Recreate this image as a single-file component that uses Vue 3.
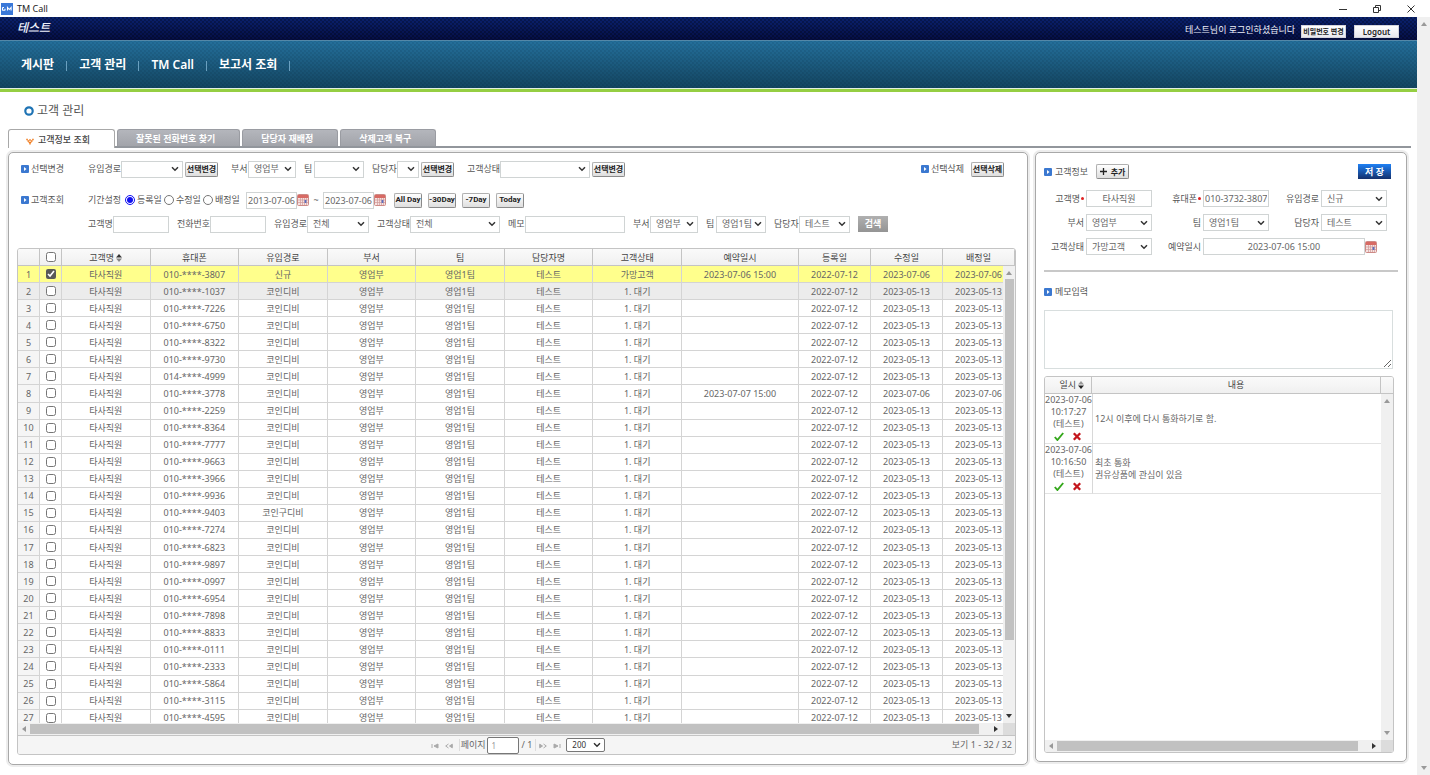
<script setup>
import { ref } from 'vue'

const nav = ['게시판', '고객 관리', 'TM Call', '보고서 조회']
const tabs = ['잘못된 전화번호 찾기', '담당자 재배정', '삭제고객 복구']
const columns = ['휴대폰', '유입경로', '부서', '팀', '담당자명', '고객상태', '예약일시', '등록일', '수정일', '배정일']
const suffixes = ['3807', '1037', '7226', '6750', '8322', '9730', '4999', '3778', '2259', '8364', '7777', '9663', '3966', '9936', '9403', '7274', '6823', '9897', '0997', '6954', '7898', '8833', '0111', '2333', '5864', '3115', '4595']

const rows = suffixes.map((s, i) => ({
  no: i + 1,
  checked: i === 0,
  cells: [
    '타사직원',
    (i === 6 ? '014' : '010') + '-****-' + s,
    i === 0 ? '신규' : i === 14 ? '코인구디비' : '코인디비',
    '영업부',
    '영업1팀',
    '테스트',
    i === 0 ? '가망고객' : '1. 대기',
    i === 0 ? '2023-07-06 15:00' : i === 7 ? '2023-07-07 15:00' : '',
    '2022-07-12',
    i === 0 || i === 7 ? '2023-07-06' : '2023-05-13',
    i === 0 || i === 7 ? '2023-07-06' : '2023-05-13',
  ],
}))

const memos = [
  { date: '2023-07-06', time: '10:17:27', who: '(테스트)', lines: ['12시 이후에 다시 통화하기로 함.'] },
  { date: '2023-07-06', time: '10:16:50', who: '(테스트)', lines: ['최초 통화', '권유상품에 관심이 있음'] },
]
const period = ref('reg')
</script>

<template>
  <div class="window">
    <header class="titlebar">
      <svg class="app-icon" viewBox="0 0 12 12"><rect width="12" height="12" fill="#3a78d8" /><path d="M1.5 4.5v3M1.5 4.5h1.5M1.5 7.3h2.5M4 5.8v1.6M6.5 7.5v-3l1.8 2 1.8-2v3" fill="none" stroke="#fff" stroke-width="1.1" /></svg>
      <span class="app-name">TM Call</span>
      <div class="win-controls">
        <button aria-label="최소화"><svg viewBox="0 0 10 10"><path d="M1 5.5h8" /></svg></button>
        <button aria-label="이전 크기로"><svg viewBox="0 0 10 10"><path d="M1.5 3.5h5v5h-5zM3.5 3.3V1.5h5v5H6.8" /></svg></button>
        <button aria-label="닫기"><svg viewBox="0 0 10 10"><path d="M1.5 1.5l7 7M8.5 1.5l-7 7" /></svg></button>
      </div>
    </header>

    <div class="viewport">
      <div class="page">
        <div class="topbar">
          <span class="brand">테스트</span>
          <span class="user">테스트님이 로그인하셨습니다</span>
          <button class="top-btn small">비밀번호 변경</button>
          <button class="top-btn">Logout</button>
        </div>
        <nav class="nav">
          <template v-for="n in nav" :key="n">
            <a href="#">{{ n }}</a><i></i>
          </template>
        </nav>

        <h1 class="heading"><svg viewBox="0 0 10 10"><circle cx="5" cy="5" r="3.7" fill="none" stroke="#1e73b4" stroke-width="2.2" /></svg>고객 관리</h1>

        <div class="tabs">
          <button class="tab active">
            <svg viewBox="0 0 8 7"><path d="M0.3 1.5h1.5M6.2 1.5h1.5M1.5 3h1.6M4.9 3h1.6M3.2 2h1.6M2.6 4.4h2.8M3.3 5.8h1.4" stroke="#f07818" stroke-width="1.4" fill="none" /></svg>고객정보 조회
          </button>
          <button v-for="t in tabs" :key="t" class="tab">{{ t }}</button>
        </div>

        <div class="panels">
          <section class="panel left">
            <div class="row">
              <h2 class="title lead"><svg class="bullet" viewBox="0 0 8 8"><rect width="8" height="8" rx="1" fill="#3b78d0" /><path d="M3 2v4l2.5-2z" fill="#fff" /></svg>선택변경</h2>
              <div class="field"><label class="l4" for="a1">유입경로</label><select id="a1" class="w62"><option></option></select><button class="btn near">선택변경</button></div>
              <div class="field wide"><label class="l2" for="a2">부서</label><select id="a2" class="w48"><option>영업부</option></select></div>
              <div class="field"><label class="l1" for="a3">팀</label><select id="a3" class="w50"><option></option></select></div>
              <div class="field"><label class="l3" for="a4">담당자</label><select id="a4" class="w22"><option></option></select><button class="btn near">선택변경</button></div>
              <div class="field wide"><label class="l4" for="a5">고객상태</label><select id="a5" class="w90"><option></option></select><button class="btn near">선택변경</button></div>
              <div class="field end">
                <h2 class="title"><svg class="bullet" viewBox="0 0 8 8"><rect width="8" height="8" rx="1" fill="#3b78d0" /><path d="M3 2v4l2.5-2z" fill="#fff" /></svg>선택삭제</h2>
                <button class="btn">선택삭제</button>
              </div>
            </div>

            <div class="row second">
              <h2 class="title lead"><svg class="bullet" viewBox="0 0 8 8"><rect width="8" height="8" rx="1" fill="#3b78d0" /><path d="M3 2v4l2.5-2z" fill="#fff" /></svg>고객조회</h2>
              <div class="radios" role="radiogroup" aria-label="기간설정">
                <span class="l4 caption">기간설정</span>
                <label><input v-model="period" type="radio" name="period" value="reg" />등록일</label>
                <label><input v-model="period" type="radio" name="period" value="mod" />수정일</label>
                <label><input v-model="period" type="radio" name="period" value="asg" />배정일</label>
              </div>
              <div class="dates">
                <input class="w51" value="2013-07-06" aria-label="시작일" />
                <svg class="cal" viewBox="0 0 12 12"><rect x=".5" y=".5" width="11" height="11" rx="1" fill="#f6e2e0" stroke="#cd8a86" /><rect x="1" y="1" width="10" height="3" fill="#d86a64" /><path d="M3.5 4v7M5.5 4v7M7.5 4v7M9.5 4v7M1 6h10M1 8.5h10" stroke="#d09a98" stroke-width=".7" /><rect x="7.6" y="6" width="1.8" height="3" fill="#5a6fc0" /></svg>
                <span class="tilde">~</span>
                <input class="w51" value="2023-07-06" aria-label="종료일" />
                <svg class="cal" viewBox="0 0 12 12"><rect x=".5" y=".5" width="11" height="11" rx="1" fill="#f6e2e0" stroke="#cd8a86" /><rect x="1" y="1" width="10" height="3" fill="#d86a64" /><path d="M3.5 4v7M5.5 4v7M7.5 4v7M9.5 4v7M1 6h10M1 8.5h10" stroke="#d09a98" stroke-width=".7" /><rect x="7.6" y="6" width="1.8" height="3" fill="#5a6fc0" /></svg>
              </div>
              <div class="quick">
                <button class="btn latin">All Day</button><button class="btn latin">-30Day</button><button class="btn latin">-7Day</button><button class="btn latin">Today</button>
              </div>
            </div>

            <div class="row third">
              <div class="field"><label class="l3" for="b1">고객명</label><input id="b1" class="w56" /></div>
              <div class="field"><label class="l4" for="b2">전화번호</label><input id="b2" class="w56" /></div>
              <div class="field"><label class="l4" for="b3">유입경로</label><select id="b3" class="w62"><option>전체</option></select></div>
              <div class="field"><label class="l4" for="b4">고객상태</label><select id="b4" class="w90"><option>전체</option></select></div>
              <div class="field"><label class="l2" for="b5">메모</label><input id="b5" class="w100" /></div>
              <div class="field"><label class="l2" for="b6">부서</label><select id="b6" class="w48"><option>영업부</option></select></div>
              <div class="field"><label class="l1" for="b7">팀</label><select id="b7" class="w50"><option>영업1팀</option></select></div>
              <div class="field"><label class="l3" for="b8">담당자</label><select id="b8" class="w51"><option>테스트</option></select></div>
              <button class="search">검색</button>
            </div>

            <div class="grid">
              <div class="clip">
                <table class="data">
                  <colgroup>
                    <col class="c-no" /><col class="c-chk" /><col v-for="i in 7" :key="i" /><col class="c-resv" /><col class="c-date" /><col class="c-date" /><col class="c-date" />
                  </colgroup>
                  <thead>
                    <tr>
                      <th></th>
                      <th><input type="checkbox" aria-label="전체 선택" /></th>
                      <th>고객명 <svg class="sort" viewBox="0 0 6 8"><path d="M0 3.5l3-3.5 3 3.5z" fill="#333" /><path d="M0 4.5h6l-3 3.5z" fill="#888" /></svg></th>
                      <th v-for="c in columns" :key="c">{{ c }}</th>
                    </tr>
                  </thead>
                  <tbody>
                    <tr v-for="r in rows" :key="r.no" :class="{ selected: r.checked, hover: r.no === 2 }">
                      <td class="num">{{ r.no }}</td>
                      <td><input type="checkbox" :checked="r.checked" :aria-label="r.no + '행 선택'" /></td>
                      <td v-for="(c, i) in r.cells" :key="i">{{ c }}</td>
                    </tr>
                  </tbody>
                </table>
                <div class="vbar over"><i class="tri up"></i><b></b><i class="tri down dark"></i></div>
              </div>
              <div class="hbar"><i class="tri lt"></i><span class="track"><b class="main-thumb"></b></span><i class="tri rt dark"></i><em></em></div>
              <footer class="pager">
                <div class="pages">
                  <button aria-label="처음"><svg viewBox="0 0 8 6"><path d="M1 1v4M7 1v4L3 3z" /></svg></button>
                  <button aria-label="이전"><svg viewBox="0 0 8 6"><path d="M3.5 1L.7 3l2.8 2" fill="none" /><path d="M7.3 1.2v3.6L4.5 3z" /></svg></button>
                  <label for="pg">페이지</label>
                  <input id="pg" value="1" />
                  <span class="total">/ 1</span>
                  <button aria-label="다음"><svg viewBox="0 0 8 6"><path d="M.7 1.2v3.6L3.5 3z" /><path d="M4.5 1l2.8 2-2.8 2" fill="none" /></svg></button>
                  <button aria-label="마지막"><svg viewBox="0 0 8 6"><path d="M1 1v4l4-2zM7 1v4" /></svg></button>
                  <select aria-label="페이지당 행 수"><option>200</option></select>
                </div>
                <span class="range">보기 1 - 32 / 32</span>
              </footer>
            </div>
          </section>

          <aside class="panel right">
            <div class="row info">
              <h2 class="title spaced"><svg class="bullet" viewBox="0 0 8 8"><rect width="8" height="8" rx="1" fill="#3b78d0" /><path d="M3 2v4l2.5-2z" fill="#fff" /></svg>고객정보</h2>
              <button class="btn add"><svg viewBox="0 0 7 7"><path d="M3.5 0v7M0 3.5h7" stroke="#222" stroke-width="1.3" /></svg>추가</button>
              <button class="save">저 장</button>
            </div>
            <div class="form">
              <label for="f1">고객명<span class="req"></span></label><input id="f1" class="mid" value="타사직원" />
              <label for="f2">휴대폰<span class="req"></span></label><input id="f2" value="010-3732-3807" />
              <label for="f3">유입경로</label><select id="f3"><option>신규</option></select>
              <label for="f4">부서</label><select id="f4"><option>영업부</option></select>
              <label for="f5">팀</label><select id="f5"><option>영업1팀</option></select>
              <label for="f6">담당자</label><select id="f6"><option>테스트</option></select>
              <label for="f7">고객상태</label><select id="f7"><option>가망고객</option></select>
              <label for="f8">예약일시</label>
              <div class="resv">
                <input id="f8" class="mid" value="2023-07-06 15:00" />
                <svg class="cal" viewBox="0 0 12 12"><rect x=".5" y=".5" width="11" height="11" rx="1" fill="#f6e2e0" stroke="#cd8a86" /><rect x="1" y="1" width="10" height="3" fill="#d86a64" /><path d="M3.5 4v7M5.5 4v7M7.5 4v7M9.5 4v7M1 6h10M1 8.5h10" stroke="#d09a98" stroke-width=".7" /><rect x="7.6" y="6" width="1.8" height="3" fill="#5a6fc0" /></svg>
              </div>
            </div>
            <hr />
            <h2 class="title spaced"><svg class="bullet" viewBox="0 0 8 8"><rect width="8" height="8" rx="1" fill="#3b78d0" /><path d="M3 2v4l2.5-2z" fill="#fff" /></svg><label for="memo">메모입력</label></h2>
            <textarea id="memo"></textarea>

            <div class="memo-grid">
              <table class="memos">
                <colgroup><col class="m-time" /><col /><col class="m-bar" /></colgroup>
                <thead>
                  <tr>
                    <th class="when">일시 <svg class="sort" viewBox="0 0 6 8"><path d="M0 3.5l3-3.5 3 3.5z" fill="#999" /><path d="M0 4.5h6l-3 3.5z" fill="#222" /></svg></th>
                    <th>내용</th>
                    <th></th>
                  </tr>
                </thead>
              </table>
              <div class="memo-body">
                <table class="memos">
                  <colgroup><col class="m-time" /><col /></colgroup>
                  <tbody>
                    <tr v-for="m in memos" :key="m.time">
                      <td class="stamp">
                        <div>{{ m.date }}</div>
                        <div>{{ m.time }}</div>
                        <div>{{ m.who }}</div>
                        <div class="acts">
                          <button aria-label="확인"><svg viewBox="0 0 10 9"><path d="M.8 5l2.6 3L9.2 1" fill="none" stroke="#35a81c" stroke-width="1.9" /></svg></button>
                          <button aria-label="삭제"><svg viewBox="0 0 10 9"><path d="M1.8 1.2l6.4 6.6M8.2 1.2L1.8 7.8" fill="none" stroke="#c4161c" stroke-width="2.3" /></svg></button>
                        </div>
                      </td>
                      <td class="text"><div v-for="l in m.lines" :key="l">{{ l }}</div></td>
                    </tr>
                  </tbody>
                </table>
                <div class="vbar"><i class="tri up"></i><i class="tri down"></i></div>
              </div>
              <div class="hbar"><i class="tri lt"></i><span class="track"><b class="memo-thumb"></b></span><i class="tri rt dark"></i><em></em></div>
            </div>
          </aside>
        </div>
      </div>
      <div class="vbar page-bar"><i class="tri up"></i><i class="tri down"></i></div>
    </div>
  </div>
</template>

<style>
body { background: #fff; }
</style>

<style scoped>
.window, .window * { box-sizing: border-box; }
.window {
  display: flex; flex-direction: column; height: 100vh; overflow: hidden;
  font-family: "Noto Sans", "Noto Sans CJK KR", sans-serif; font-size: 9px; line-height: 12px; color: #666;
}
button, input, select, textarea { font: inherit; color: inherit; margin: 0; padding: 0; }
button { cursor: pointer; white-space: nowrap; }
svg { display: block; flex: none; }
h1, h2 { margin: 0; font-weight: 400; }

.titlebar { display: flex; align-items: center; height: 17px; flex: none; padding: 0 14px 0 1px; color: #222; }
.app-icon { width: 12px; height: 12px; margin-right: 4px; }
.win-controls { display: flex; gap: 24px; margin-left: auto; }
.win-controls button { border: 0; background: none; width: 10px; height: 10px; }
.win-controls button svg { width: 10px; height: 10px; fill: none; stroke: #333; stroke-width: 1; }

.viewport { display: flex; flex: 1; min-height: 0; }
.page { flex: 1; min-width: 0; display: flex; flex-direction: column; }

.topbar {
  display: flex; align-items: center; gap: 8px; height: 23px; flex: none; padding: 3px 18px 0 17px; color: #eef0fa;
  background:
    conic-gradient(#0004 25%, #0000 0 50%, #0004 0 75%, #0000 0) 0 0 / 4px 4px,
    linear-gradient(#0a2270, #050e44);
}
.brand { font-size: 12px; line-height: 16px; font-style: italic; align-self: flex-start; font-weight: 500; }
.user { margin-left: auto; margin-right: -2px; }
.top-btn { width: 45px; height: 13px; border: 1px solid #d4d4dc; background: linear-gradient(#fff, #e8e8ee); color: #222; font-size: 8px; line-height: 10px; font-weight: 600; margin-top: 3px; }
.top-btn.small { font-size: 7px; }
.nav {
  display: flex; align-items: center; height: 52px; flex: none; padding: 0 21px; border-bottom: 3px solid #95ce42;
  background:
    conic-gradient(#00182818 25%, #0000 0 50%, #00182818 0 75%, #0000 0) 0 0 / 4px 4px,
    linear-gradient(#24709c, #13445f);
  box-shadow: inset 0 1px #5488a8, inset 0 -1px #e4f0e0;
}
.nav a { color: #fff; font-size: 12px; line-height: 16px; font-weight: 600; text-decoration: none; white-space: nowrap; }
.nav i { width: 1px; height: 10px; margin: 3px 12px 0; background: #6aa0c0; }

.heading { display: flex; align-items: flex-start; gap: 3px; padding: 9px 24px 0; height: 37px; flex: none; font-size: 12px; line-height: 20px; color: #555; }
.heading svg { width: 10px; height: 10px; margin-top: 5px; }

.tabs { display: flex; gap: 2px; height: 19px; flex: none; margin: 0 6px 0 8px; border-bottom: 2px solid #92969c; }
.tab { height: 17px; border: 1px solid #9a9ca2; border-bottom: 0; border-radius: 3px 3px 0 0; background: linear-gradient(#b4b6bc, #a2a4aa); color: #fff; font-weight: 600; padding: 2px 24px 0 18px; }
.tab.active { display: flex; align-items: center; gap: 4px; height: 19px; width: 107px; background: #fff; color: #444; font-weight: 500; padding: 2px 17px 0; border-color: #a8a8a8; }
.tab svg { width: 8px; height: 7px; margin-top: 2px; }

.panels { display: flex; flex: 1; min-height: 0; gap: 7px; padding: 4px 10px 10px 8px; }
.panel { display: flex; flex-direction: column; min-height: 0; border: 1px solid #a8a8a8; border-radius: 5px; box-shadow: 0 0 0 2px #ededed; background: #fff; }
.left { flex: 1; min-width: 0; padding: 7px 11px 9px 8px; }
.right { width: 372px; flex: none; margin-bottom: 3px; padding: 11px 8px 8px; }

.row { display: flex; align-items: center; gap: 8px; height: 18px; flex: none; padding: 0 12px 0 4px; }
.row.second { margin-top: 13px; }
.row.third { margin-top: 6px; padding-left: 71px; }
.title { display: flex; align-items: center; gap: 2px; font-size: 9px; white-space: nowrap; color: #555; }
.title.spaced { gap: 3px; }
.title.lead { width: 59px; }
.bullet { width: 8px; height: 8px; }
.field { display: flex; align-items: center; }
.field.wide { margin-left: 5px; }
.field.end { margin-left: auto; gap: 7px; }
.l1 { width: 10px; } .l2 { width: 17px; } .l3 { width: 25px; } .l4 { width: 33px; }
.field label, .caption { flex: none; white-space: nowrap; color: #555; }

input:not([type]), select { height: 17px; border: 1px solid #d0d4d4; background-color: #fff; border-radius: 0; outline: 0; }
input:not([type]) { padding: 0 1px; }
select {
  appearance: none; padding: 0 12px 0 5px;
  background-image: url("data:image/svg+xml,%3Csvg xmlns='http://www.w3.org/2000/svg' viewBox='0 0 8 6'%3E%3Cpath d='M1 1.2l3 3 3-3' fill='none' stroke='%23333' stroke-width='1.5'/%3E%3C/svg%3E");
  background-repeat: no-repeat; background-position: right 3px center; background-size: 8px 6px;
}
.w22 { width: 22px; padding: 0; } .w48 { width: 48px; } .w50 { width: 50px; } .w51 { width: 51px; } .w56 { width: 56px; }
.w62 { width: 62px; } .w90 { width: 90px; } .w100 { width: 100px; }

.btn { width: 33px; height: 15px; border: 1px solid #b0b0b0; border-right-color: #8a8a8a; border-bottom-color: #8a8a8a; border-radius: 2px; background: linear-gradient(#fff, #dedede); color: #222; font-size: 8px; line-height: 12px; font-weight: 700; }
.btn.near { margin-left: 2px; }
.btn.latin { width: 28px; font-family: Roboto, sans-serif; font-size: 8px; }
.quick { display: flex; gap: 6px; }
.radios { display: flex; align-items: center; color: #555; }
.radios label { display: flex; align-items: center; gap: 2px; width: 39px; white-space: nowrap; }
.radios .caption { margin-right: 4px; }
input[type="radio"] { width: 10px; height: 10px; accent-color: #1010f0; flex: none; }
.dates { display: flex; align-items: center; margin-left: -4px; }
.cal { width: 12px; height: 12px; }
.tilde { width: 14px; text-align: center; }
.search { width: 30px; height: 16px; border: 0; background: linear-gradient(#b0b0b0, #949494); color: #fff; font-weight: 600; }

.grid { flex: 1; min-height: 0; display: flex; flex-direction: column; margin-top: 15px; border: 1px solid #c4c4c4; border-radius: 3px; overflow: hidden; }
.clip { flex: 1; min-height: 0; overflow: hidden; position: relative; }
table { border-collapse: separate; border-spacing: 0; table-layout: fixed; width: 100%; }
.data { height: 478px; }
.data th, .data td { height: 17px; padding: 0; text-align: center; font-weight: 400; border-right: 1px solid #d4d4d4; border-bottom: 1px solid #d4d4d4; white-space: nowrap; line-height: 9px; }
.data th, .memos th { background: linear-gradient(#fafafa, #f0f0f0); color: #444; border-color: #c4c4c4; }
.data .num { background: #f5f5f5; }
.data .selected td { background: #ffff8c; }
.data .hover td { background: #ececec; }
.c-no { width: 22px; } .c-chk { width: 22px; } .c-resv { width: 117px; } .c-date { width: 72px; }
input[type="checkbox"] { display: block; width: 10px; height: 10px; margin: 0 auto; accent-color: #585858; }
.sort { display: inline-block; width: 6px; height: 8px; vertical-align: -1px; }

.vbar { display: flex; flex-direction: column; align-items: center; width: 12px; flex: none; background: #f0f0f0; padding: 5px 0; }
.vbar.page-bar { width: 13px; }
.vbar.over { position: absolute; right: 0; top: 17px; bottom: 0; }
.vbar b { width: 9px; height: 361px; margin-top: 4px; background: #c1c1c1; }
.tri { width: 0; height: 0; flex: none; border: 3px solid transparent; }
.tri.up { border-top: 0; border-bottom: 4px solid #999; }
.tri.down { border-bottom: 0; border-top: 4px solid #999; margin-top: auto; }
.tri.lt { border-left: 0; border-right: 4px solid #999; margin: 0 4px; }
.tri.rt { border-right: 0; border-left: 4px solid #999; margin: 0 5px; }
.tri.down.dark { border-top-color: #333; }
.tri.rt.dark { border-left-color: #333; }
.hbar { display: flex; align-items: center; height: 12px; flex: none; background: #f0f0f0; }
.hbar em { width: 12px; height: 12px; background: #dcdcdc; }
.track { flex: 1; display: flex; height: 10px; }
.main-thumb { width: 99%; background: #c1c1c1; }
.memo-thumb { width: 97%; background: #c1c1c1; }

.pager { display: grid; grid-template-columns: 1fr auto 1fr; align-items: center; height: 19px; flex: none; border-top: 1px solid #c4c4c4; background: #f5f5f5; padding-right: 3px; }
.pages { grid-column: 2; display: flex; align-items: center; padding-left: 3px; }
.pages button { border: 0; background: none; width: 14px; }
.pages button svg { width: 8px; height: 6px; margin: 2px auto 0; fill: #aaa; stroke: #aaa; stroke-width: 1; }
.pages label { border-left: 1px solid #ddd; margin-left: 3px; padding: 0 1px; }
.pages input:not([type]) { width: 32px; border: 1px solid #777; border-radius: 2px; padding-left: 4px; font-size: 8px; color: #999; }
.pages .total { border-right: 1px solid #ddd; padding: 0 3px; }
.pages select { width: 39px; height: 14px; border-color: #777; border-radius: 2px; font-size: 8px; color: #333; margin-left: 2px; }
.range { text-align: right; }

.row.info { height: 15px; padding: 0 7px 0 0; }
.add { display: flex; align-items: center; justify-content: center; gap: 4px; }
.add svg { width: 7px; height: 7px; }
.save { margin-left: auto; width: 33px; height: 15px; border: 0; background: linear-gradient(#1e80f4, #14306c); color: #fff; font-weight: 700; }
.form { display: grid; grid-template-columns: 42px 1fr 51px 1fr 52px 1fr; row-gap: 7px; margin-top: 11px; padding-right: 11px; }
.form label { display: flex; justify-content: flex-end; align-items: center; padding-right: 2px; white-space: nowrap; color: #555; }
.form input, .form select { width: 100%; min-width: 0; }
.mid { text-align: center; }
.req { width: 3px; height: 3px; border-radius: 50%; background: #e02020; margin-left: 1px; }
.resv { grid-column: span 3; display: flex; align-items: center; padding-right: 10px; }
.resv input { flex: 1; }
hr { width: 100%; height: 2px; border: 0; background: #c8c8c8; margin: 15px 0 14px; flex: none; }
.right > .title { height: 12px; flex: none; }
textarea { display: block; height: 59px; flex: none; margin: 12px 5px 7px 0; border: 1px solid #d8dede; resize: both; outline: 0; }

.memo-grid { flex: 1; min-height: 0; margin-right: 4px; display: flex; flex-direction: column; border: 1px solid #c4c4c4; border-radius: 3px; overflow: hidden; }
.memo-body { flex: 1; min-height: 0; display: flex; align-items: stretch; }
.memo-body .memos { flex: 1; width: auto; align-self: flex-start; }
.m-time { width: 47px; } .m-bar { width: 12px; }
.memos th { height: 17px; padding: 0; font-weight: 400; border-right: 1px solid #c4c4c4; border-bottom: 1px solid #c4c4c4; }
.memos th:last-child { border-right: 0; }
.memos .when { padding-left: 8px; }
.memos td { height: 50px; padding: 0; border-bottom: 1px solid #e2e2e2; }
.memos .stamp { border-right: 1px solid #d8d8d8; text-align: center; vertical-align: top; white-space: nowrap; }
.acts { display: flex; justify-content: center; gap: 8px; padding-top: 2px; }
.acts button { border: 0; background: none; }
.acts svg { width: 10px; height: 9px; }
.memos .text { padding-left: 2px; }
</style>
